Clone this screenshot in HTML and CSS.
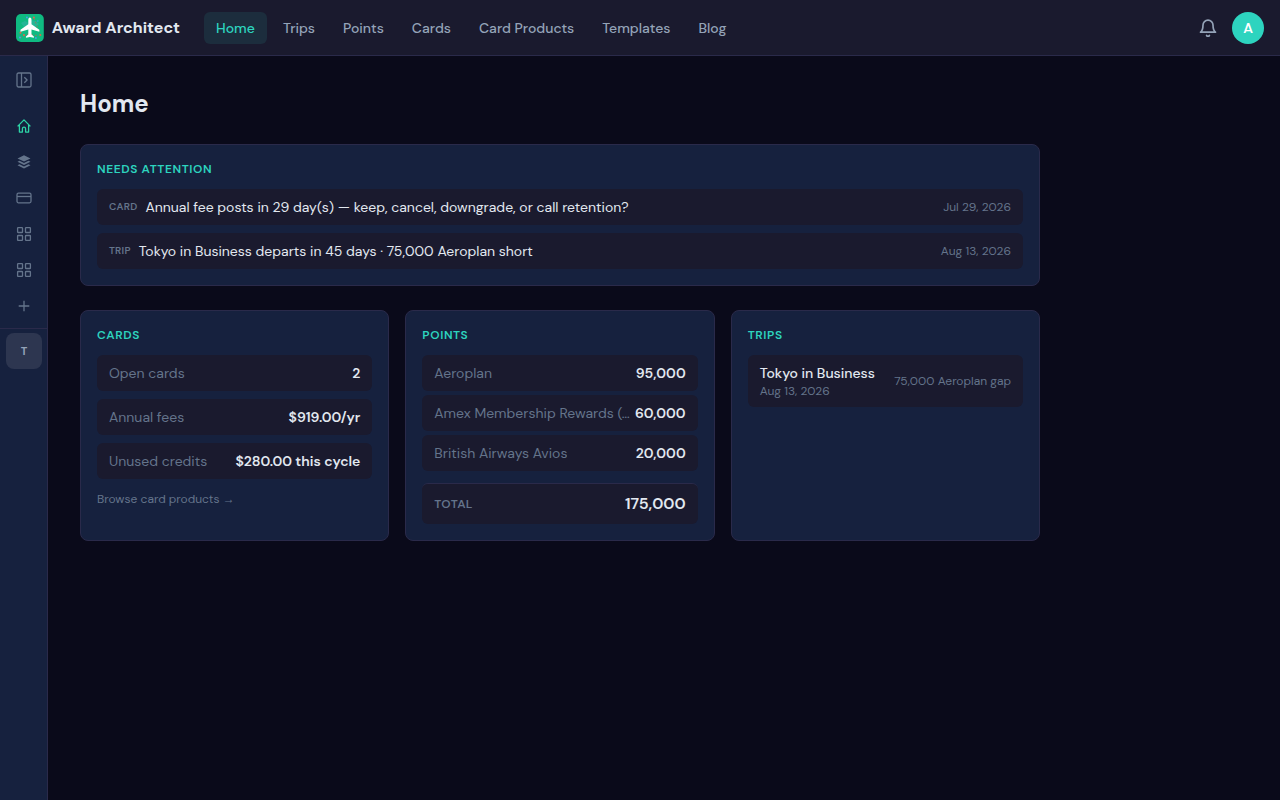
FILE: index.html
```html
<!doctype html>
<html lang="en">
  <head>
    <meta charset="UTF-8" />
    <meta name="viewport" content="width=device-width, initial-scale=1.0" />
    <title>Award Architect</title>
    <link rel="stylesheet" href="styles.css">
  </head>
  <body>
    <header class="header">
      <a class="brand" href="#">
        <svg class="logo" viewBox="0 0 28 28">
          <rect width="28" height="28" rx="5" fill="#0fba81" />
          <path d="M5 9l4-2 4 2 2-3 5 1 3 3-3 3-6-1-5 2z" fill="#2fb5a0" opacity=".7" />
          <path d="M4 19L10 12M18 4l6 15M4 24l8-4 11 2" fill="none" stroke="#8a7b62" stroke-width="1" stroke-dasharray="2 2" />
          <g fill="#e0674a">
            <circle cx="18" cy="3.500" r="1" /><circle cx="4.500" cy="18.800" r="1" />
            <circle cx="24.500" cy="21" r="1" /><circle cx="8" cy="21" r="1" />
          </g>
          <g fill="#4a9be8">
            <circle cx="11" cy="3.500" r="1" /><circle cx="4" cy="23.500" r="1" />
            <circle cx="20" cy="24" r="1" /><circle cx="22" cy="7" r=".8" />
          </g>
          <path d="M14 3.500c-1 0-1.600 1-1.600 2.200v4.600L4.500 15.700v2l7.900-2.300v5.200l-2.400 2v1.300l4-.9 4 .9v-1.300l-2.400-2v-5.200l7.900 2.300v-2l-7.900-5.400V5.700c0-1.200-.6-2.200-1.600-2.200z" fill="#fff" />
        </svg>
        <span class="brand-name">Award Architect</span>
      </a>
      <nav class="nav">
        <a class="active" href="#">Home</a>
        <a href="#">Trips</a>
        <a href="#">Points</a>
        <a href="#">Cards</a>
        <a href="#">Card Products</a>
        <a href="#">Templates</a>
        <a href="#">Blog</a>
      </nav>
      <div class="header-right">
        <svg class="bell" viewBox="0 0 24 24">
          <path d="M18 8.500a6 6 0 0 0-12 0c0 6.500-3 8.500-3 8.500h18s-3-2-3-8.500" />
          <path d="M13.700 21a2 2 0 0 1-3.400 0" />
        </svg>
        <div class="avatar">A</div>
      </div>
    </header>

    <div class="layout">
      <aside class="sidebar">
        <button class="side-toggle">
          <svg viewBox="0 0 16 16"><rect x="1" y="1" width="14" height="14" rx="1.500" /><path d="M5.500 1v14M8.300 5.200L11.100 8l-2.800 2.800" /></svg>
        </button>
        <a class="side-link active" href="#">
          <svg viewBox="0 0 16 16"><path d="M1.600 8.400L8 1.900l6.400 6.500M3.400 7v7.100h3v-3.300a1.600 1.600 0 0 1 3.200 0v3.300h3V7" /></svg>
        </a>
        <a class="side-link" href="#">
          <svg class="filled" viewBox="0 0 16 16"><path d="M8 1.200L14.500 4.400 8 7.600 1.500 4.400zM1.500 7.800l2-1L8 9l4.500-2.200 2 1L8 11zM1.500 11.300l2-1L8 12.500l4.500-2.200 2 1L8 14.500z" /></svg>
        </a>
        <a class="side-link" href="#">
          <svg viewBox="0 0 16 16"><rect x="1" y="3.200" width="14" height="9.600" rx="1.500" /><path d="M1 6.500h14" /></svg>
        </a>
        <a class="side-link" href="#">
          <svg viewBox="0 0 16 16"><rect x="1.600" y="1.600" width="4.900" height="4.900" rx=".6" /><rect x="9.500" y="1.600" width="4.900" height="4.900" rx=".6" /><rect x="1.600" y="9.500" width="4.900" height="4.900" rx=".6" /><rect x="9.500" y="9.500" width="4.900" height="4.900" rx=".6" /></svg>
        </a>
        <a class="side-link" href="#">
          <svg viewBox="0 0 16 16"><rect x="1.600" y="1.600" width="4.900" height="4.900" rx=".6" /><rect x="9.500" y="1.600" width="4.900" height="4.900" rx=".6" /><rect x="1.600" y="9.500" width="4.900" height="4.900" rx=".6" /><rect x="9.500" y="9.500" width="4.900" height="4.900" rx=".6" /></svg>
        </a>
        <a class="side-link" href="#">
          <svg viewBox="0 0 16 16"><path d="M8 2.700v10.600M2.700 8h10.600" /></svg>
        </a>
        <div class="side-trips">
          <a class="trip-chip" href="#">T</a>
        </div>
      </aside>

      <main class="main">
        <h1>Home</h1>

        <section class="panel attention">
          <h2>Needs attention</h2>
          <div class="rows">
            <div class="row">
              <span class="tag">Card</span>
              <span class="message">Annual fee posts in 29 day(s) — keep, cancel, downgrade, or call retention?</span>
              <span class="date">Jul 29, 2026</span>
            </div>
            <div class="row">
              <span class="tag">Trip</span>
              <span class="message">Tokyo in Business departs in 45 days · 75,000 Aeroplan short</span>
              <span class="date">Aug 13, 2026</span>
            </div>
          </div>
        </section>

        <div class="panels">
          <section class="panel">
            <h2>Cards</h2>
            <div class="rows">
              <div class="row"><span class="label">Open cards</span><span class="value">2</span></div>
              <div class="row"><span class="label">Annual fees</span><span class="value">$919.00/yr</span></div>
              <div class="row"><span class="label">Unused credits</span><span class="value">$280.00 this cycle</span></div>
            </div>
            <a class="browse" href="#">Browse card products <span class="arrow">→</span></a>
          </section>

          <section class="panel">
            <h2>Points</h2>
            <div class="rows tight">
              <div class="row"><span class="label">Aeroplan</span><span class="value">95,000</span></div>
              <div class="row"><span class="label">Amex Membership Rewards (CA)</span><span class="value">60,000</span></div>
              <div class="row"><span class="label">British Airways Avios</span><span class="value">20,000</span></div>
            </div>
            <div class="row total"><span class="total-label">Total</span><span class="total-value">175,000</span></div>
          </section>

          <section class="panel">
            <h2>Trips</h2>
            <div class="row trip">
              <div>
                <div class="trip-name">Tokyo in Business</div>
                <div class="trip-date">Aug 13, 2026</div>
              </div>
              <span class="gap">75,000 Aeroplan gap</span>
            </div>
          </section>
        </div>
      </main>
    </div>
  </body>
</html>
```

FILE: styles.css
```css
* {
  box-sizing: border-box;
}

body {
  margin: 0;
  min-height: 100vh;
  display: flex;
  flex-direction: column;
  background: #0a0a1a;
  color: #e2e8f0;
  font-family: "DM Sans", Inter, sans-serif;
  font-size: 14px;
  line-height: 20px;
}

a {
  color: inherit;
  text-decoration: none;
}

/* Header */
.header {
  height: 56px;
  display: flex;
  align-items: center;
  padding: 0 16px;
  background: #1a1a2e;
  border-bottom: 1px solid #2a2a4a;
}

.brand {
  display: flex;
  align-items: center;
  gap: 8px;
  width: 164px;
  margin-right: 24px;
}

.logo {
  width: 28px;
  height: 28px;
}

.brand-name {
  font-size: 16px;
  font-weight: 700;
  white-space: nowrap;
}

.nav {
  display: flex;
  gap: 4px;
}

.nav a {
  padding: 6px 12px;
  border-radius: 6px;
  color: #94a3b8;
  font-weight: 500;
}

.nav a.active {
  background: #1c2d3d;
  color: #2dd4bf;
}

.header-right {
  display: flex;
  align-items: center;
  gap: 14px;
  margin-left: auto;
}

.bell {
  width: 20px;
  height: 20px;
  fill: none;
  stroke: #94a3b8;
  stroke-width: 2;
  stroke-linecap: round;
  stroke-linejoin: round;
}

.avatar {
  width: 32px;
  height: 32px;
  border-radius: 50%;
  background: #2dd4bf;
  color: #fff;
  font-size: 14px;
  font-weight: 600;
  line-height: 32px;
  text-align: center;
}

.layout {
  flex: 1;
  display: flex;
}

/* Sidebar */
.sidebar {
  width: 48px;
  background: #16213e;
  border-right: 1px solid #2a2a4a;
  display: flex;
  flex-direction: column;
}

.sidebar svg {
  width: 16px;
  height: 16px;
  fill: none;
  stroke: currentColor;
  stroke-width: 1.3;
  stroke-linejoin: round;
}

.sidebar svg.filled {
  fill: currentColor;
  stroke: none;
}

.side-toggle,
.side-link {
  display: flex;
  align-items: center;
  justify-content: center;
  width: 48px;
  height: 36px;
  padding: 0;
  border: none;
  background: none;
  color: #64748b;
}

.side-toggle {
  height: 48px;
  margin-bottom: 4px;
}

.side-link.active {
  color: #2dd4a7;
}

.side-trips {
  margin-top: 4px;
  padding: 4px 6px;
  border-top: 1px solid #2a2a4a;
}

.trip-chip {
  display: block;
  width: 36px;
  height: 36px;
  border-radius: 8px;
  background: #2d3650;
  color: #94a3b8;
  font-size: 11px;
  font-weight: 700;
  line-height: 36px;
  text-align: center;
}

/* Dashboard */
.main {
  width: 1024px;
  padding: 32px;
}

h1 {
  margin: 0 0 24px;
  font-size: 24px;
  font-weight: 700;
  line-height: 32px;
}

h2 {
  margin: 0 0 12px;
  color: #2dd4bf;
  font-size: 12px;
  font-weight: 600;
  line-height: 16px;
  letter-spacing: 0.6px;
  text-transform: uppercase;
}

.panel {
  min-width: 0;
  padding: 16px;
  background: #16213e;
  border: 1px solid #2a2a4a;
  border-radius: 8px;
}

.attention {
  margin-bottom: 24px;
}

.panels {
  display: grid;
  grid-template-columns: repeat(3, 1fr);
  gap: 16px;
}

.rows {
  display: flex;
  flex-direction: column;
  gap: 8px;
}

.rows.tight {
  gap: 4px;
}

.row {
  display: flex;
  align-items: center;
  justify-content: space-between;
  padding: 8px 12px;
  border-radius: 6px;
  background: #1a1a2e;
  white-space: nowrap;
}

.tag {
  margin-right: 8px;
  color: #64748b;
  font-size: 10px;
  font-weight: 600;
  letter-spacing: 0.25px;
  text-transform: uppercase;
}

.message {
  flex: 1;
}

.date,
.gap {
  color: #64748b;
  font-size: 12px;
}

.label {
  min-width: 0;
  overflow: hidden;
  text-overflow: ellipsis;
  color: #64748b;
}

.value {
  margin-left: 4px;
  font-weight: 600;
}

.browse {
  display: block;
  margin-top: 12px;
  color: #64748b;
  font-size: 12px;
  line-height: 16px;
}

.arrow {
  font-family: "Liberation Sans", sans-serif;
}

.total {
  margin-top: 12px;
  border-top: 1px solid #2a2a4a;
}

.total-label {
  color: #64748b;
  font-size: 12px;
  font-weight: 600;
  letter-spacing: 0.3px;
  text-transform: uppercase;
}

.total-value {
  font-size: 16px;
  font-weight: 600;
  line-height: 24px;
}

.trip-name {
  font-weight: 500;
}

.trip-date {
  color: #64748b;
  font-size: 12px;
  line-height: 16px;
}
```
